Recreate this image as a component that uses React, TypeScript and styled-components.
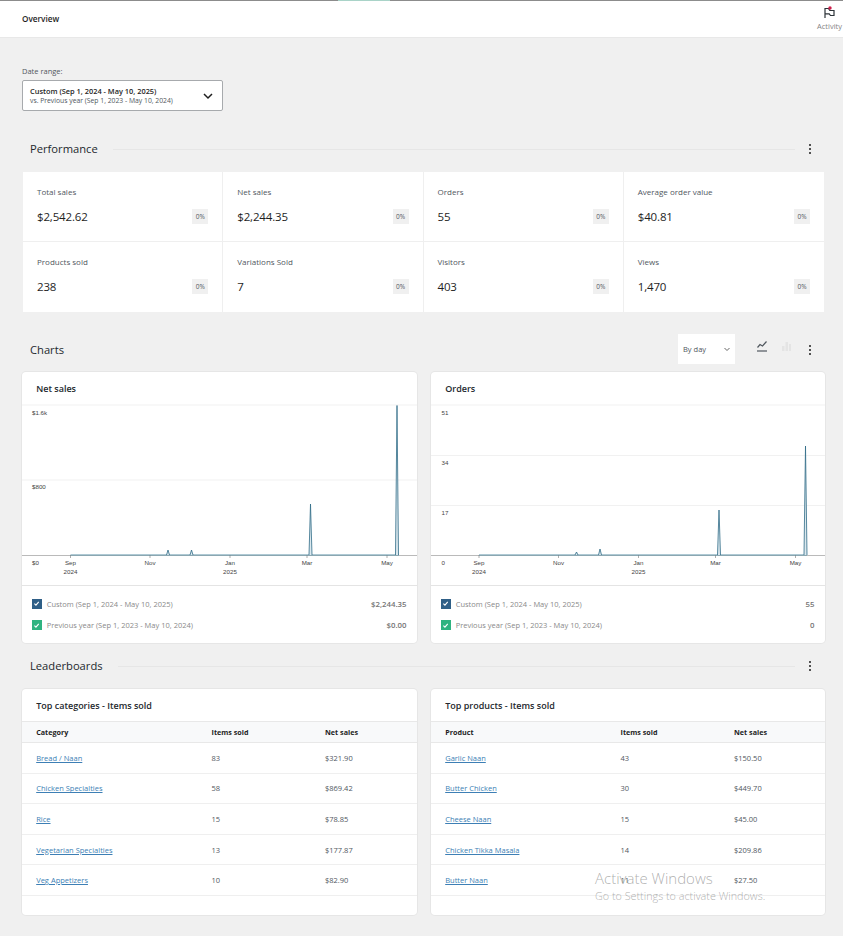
import styled, { createGlobalStyle } from 'styled-components';

const GlobalStyle = createGlobalStyle`
  html, body {
    margin: 0;
    padding: 0;
    background: #f0f0f0;
  }
  body {
    font-family: "Open Sans", "Noto Sans", sans-serif;
    color: #1e1e1e;
    -webkit-font-smoothing: antialiased;
  }
  * {
    box-sizing: border-box;
  }
`;

const stats = [
  { label: 'Total sales', value: '$2,542.62' },
  { label: 'Net sales', value: '$2,244.35' },
  { label: 'Orders', value: '55' },
  { label: 'Average order value', value: '$40.81' },
  { label: 'Products sold', value: '238' },
  { label: 'Variations Sold', value: '7' },
  { label: 'Visitors', value: '403' },
  { label: 'Views', value: '1,470' },
];

const netSalesChart = {
  gridLines: [1, 76],
  yLabels: [
    { text: '$1.6k', x: 10, y: 10.5 },
    { text: '$800', x: 10, y: 85 },
    { text: '$0', x: 10, y: 161 },
  ],
  xLabels: [
    { text: 'Sep', sub: '2024', x: 48.5 },
    { text: 'Nov', x: 128 },
    { text: 'Jan', sub: '2025', x: 208 },
    { text: 'Mar', x: 285 },
    { text: 'May', x: 365 },
  ],
  lineStart: 48.5,
  lineEnd: 377,
  spikes: [
    { x: 146, top: 146 },
    { x: 169.5, top: 146 },
    { x: 288.5, top: 100 },
    { x: 375, top: 1.5 },
  ],
};

const ordersChart = {
  gridLines: [1, 51.5, 101.5],
  yLabels: [
    { text: '51', x: 10.5, y: 10.5 },
    { text: '34', x: 10.5, y: 60.5 },
    { text: '17', x: 10.5, y: 111 },
    { text: '0', x: 10.5, y: 161 },
  ],
  xLabels: [
    { text: 'Sep', sub: '2024', x: 48 },
    { text: 'Nov', x: 127.5 },
    { text: 'Jan', sub: '2025', x: 207.5 },
    { text: 'Mar', x: 284.5 },
    { text: 'May', x: 364.5 },
  ],
  lineStart: 48,
  lineEnd: 376,
  spikes: [
    { x: 145.5, top: 148 },
    { x: 169, top: 145 },
    { x: 288, top: 106 },
    { x: 374.5, top: 42 },
  ],
};

const categories = [
  ['Bread / Naan', '83', '$321.90'],
  ['Chicken Specialties', '58', '$869.42'],
  ['Rice', '15', '$78.85'],
  ['Vegetarian Specialties', '13', '$177.87'],
  ['Veg Appetizers', '10', '$82.90'],
];

const products = [
  ['Garlic Naan', '43', '$150.50'],
  ['Butter Chicken', '30', '$449.70'],
  ['Cheese Naan', '15', '$45.00'],
  ['Chicken Tikka Masala', '14', '$209.86'],
  ['Butter Naan', '11', '$27.50'],
];

const AXIS_Y = 151;

const LineChart = ({ data }: { data: typeof netSalesChart }) => (
  <ChartSvg viewBox="0 0 395 181">
    {data.gridLines.map((y) => (
      <line key={y} x1="0" x2="395" y1={y} y2={y} stroke="#f1f1f1" strokeWidth="1" />
    ))}
    <line x1="0" x2="395" y1={AXIS_Y + 0.5} y2={AXIS_Y + 0.5} stroke="#a8a8a8" strokeWidth="0.8" />
    {data.yLabels.map((l) => (
      <AxisText key={l.text} x={l.x} y={l.y}>{l.text}</AxisText>
    ))}
    {data.xLabels.map((l) => (
      <g key={l.text}>
        <line x1={l.x} x2={l.x} y1={AXIS_Y} y2={AXIS_Y + 3} stroke="#777" strokeWidth="0.6" />
        <AxisText x={l.x} y={161} textAnchor="middle">{l.text}</AxisText>
        {l.sub && <AxisText x={l.x} y={169.5} textAnchor="middle">{l.sub}</AxisText>}
      </g>
    ))}
    <line x1={data.lineStart} x2={data.lineEnd} y1={AXIS_Y} y2={AXIS_Y} stroke="#5c93a8" strokeWidth="1" />
    {data.spikes.map((s) => (
      <polyline
        key={s.x}
        points={`${s.x - 1.5},${AXIS_Y} ${s.x},${s.top} ${s.x + 1.5},${AXIS_Y}`}
        fill="#dbe8ee"
        stroke="#2f6b86"
        strokeWidth="0.8"
      />
    ))}
  </ChartSvg>
);

const KebabMenu = () => (
  <Kebab>
    <span />
    <span />
    <span />
  </Kebab>
);

const LegendRow = ({ color, label, value }: { color: string; label: string; value: string }) => (
  <LegendLine>
    <LegendBox $color={color}>
      <svg width="7" height="7" viewBox="0 0 10 10">
        <path d="M2 5.2 L4.2 7.4 L8.2 2.8" fill="none" stroke="#fff" strokeWidth="1.6" />
      </svg>
    </LegendBox>
    <LegendLabel>{label}</LegendLabel>
    <LegendValue>{value}</LegendValue>
  </LegendLine>
);

const Leaderboard = ({ title, head, rows }: { title: string; head: string; rows: string[][] }) => (
  <Card>
    <CardTitle>{title}</CardTitle>
    <Table>
      <thead>
        <tr>
          <Th>{head}</Th>
          <Th>Items sold</Th>
          <Th>Net sales</Th>
        </tr>
      </thead>
      <tbody>
        {rows.map((row) => (
          <tr key={row[0]}>
            <Td><RowLink href="#">{row[0]}</RowLink></Td>
            <Td>{row[1]}</Td>
            <Td>{row[2]}</Td>
          </tr>
        ))}
      </tbody>
    </Table>
  </Card>
);

const App = () => (
  <Page>
    <GlobalStyle />
    <TopLine>
      <TopAccent />
    </TopLine>
    <Header>
      <HeaderTitle>Overview</HeaderTitle>
      <ActivityButton>
        <svg width="13" height="13" viewBox="0 0 13 13">
          <path d="M2 12 V2.5 H5.5 L6.8 4.5 H11 V9.5 H7.5 L6.2 7.8 H2" fill="none" stroke="#2c3338" strokeWidth="1.2" />
          <circle cx="7" cy="2" r="1.7" fill="#cc1e4a" />
        </svg>
        <span>Activity</span>
      </ActivityButton>
    </Header>

    <Content>
      <DateLabel>Date range:</DateLabel>
      <DateSelect>
        <div>
          <DateMain>Custom (Sep 1, 2024 - May 10, 2025)</DateMain>
          <DateSub>vs. Previous year (Sep 1, 2023 - May 10, 2024)</DateSub>
        </div>
        <svg width="12" height="12" viewBox="0 0 12 12">
          <path d="M2 4 L6 8 L10 4" fill="none" stroke="#1e1e1e" strokeWidth="1.5" />
        </svg>
      </DateSelect>

      <SectionHead $top={28} $bottom={13}>
        <SectionTitle>Performance</SectionTitle>
        <SectionRule />
        <KebabMenu />
      </SectionHead>

      <StatGrid>
        {stats.map((s) => (
          <StatCell key={s.label}>
            <StatLabel>{s.label}</StatLabel>
            <StatRow>
              <StatValue>{s.value}</StatValue>
              <StatBadge>0%</StatBadge>
            </StatRow>
          </StatCell>
        ))}
      </StatGrid>

      <SectionHead $top={28} $bottom={12}>
        <SectionTitle>Charts</SectionTitle>
        <ChartControls>
          <IntervalSelect>
            By day
            <svg width="8" height="8" viewBox="0 0 8 8">
              <path d="M1.5 3 L4 5.5 L6.5 3" fill="none" stroke="#555" strokeWidth="0.9" />
            </svg>
          </IntervalSelect>
          <ChartTypeIcon width="14" height="14" viewBox="0 0 14 14">
            <path d="M2.5 8.5 L5 5.5 L7.5 7 L11.5 2.5" fill="none" stroke="#50575e" strokeWidth="1.2" />
            <path d="M2 12 H12" stroke="#50575e" strokeWidth="1.2" />
          </ChartTypeIcon>
          <ChartTypeIcon width="14" height="14" viewBox="0 0 14 14">
            <path d="M3 12 V7 H5.5 V12 Z M6.5 12 V3 H9 V12 Z M10 12 V5 H12 V12 Z" fill="#e4e4e4" />
          </ChartTypeIcon>
        </ChartControls>
        <KebabMenu />
      </SectionHead>

      <TwoCols>
        <Card>
          <CardTitle>Net sales</CardTitle>
          <LineChart data={netSalesChart} />
          <Legend>
            <LegendRow color="#2f5f87" label="Custom (Sep 1, 2024 - May 10, 2025)" value="$2,244.35" />
            <LegendRow color="#2fb380" label="Previous year (Sep 1, 2023 - May 10, 2024)" value="$0.00" />
          </Legend>
        </Card>
        <Card>
          <CardTitle>Orders</CardTitle>
          <LineChart data={ordersChart} />
          <Legend>
            <LegendRow color="#2f5f87" label="Custom (Sep 1, 2024 - May 10, 2025)" value="55" />
            <LegendRow color="#2fb380" label="Previous year (Sep 1, 2023 - May 10, 2024)" value="0" />
          </Legend>
        </Card>
      </TwoCols>

      <SectionHead $top={13} $bottom={13}>
        <SectionTitle>Leaderboards</SectionTitle>
        <SectionRule />
        <KebabMenu />
      </SectionHead>

      <TwoCols>
        <Leaderboard title="Top categories - Items sold" head="Category" rows={categories} />
        <Leaderboard title="Top products - Items sold" head="Product" rows={products} />
      </TwoCols>
    </Content>

    <ActivationNotice>
      <ActivationTitle>Activate Windows</ActivationTitle>
      <ActivationText>Go to Settings to activate Windows.</ActivationText>
    </ActivationNotice>
  </Page>
);

export default App;

const Page = styled.div`
  position: relative;
  width: 843px;
  height: 936px;
  overflow: hidden;
  background: #f0f0f0;
`;

const TopLine = styled.div`
  height: 1px;
  background: #8c8c8c;
  padding-left: 338px;
`;

const TopAccent = styled.div`
  width: 52px;
  height: 1px;
  background: #a9d3c8;
`;

const Header = styled.header`
  height: 37px;
  background: #fff;
  display: flex;
  align-items: flex-start;
  justify-content: space-between;
  padding-left: 22px;
  border-bottom: 1px solid #e8e8e8;
`;

const HeaderTitle = styled.h1`
  margin: 12px 0 0;
  font-size: 8.2px;
  line-height: 12px;
  font-weight: 600;
`;

const ActivityButton = styled.div`
  width: 27px;
  display: flex;
  flex-direction: column;
  align-items: center;
  gap: 2px;
  padding-top: 5px;
  font-size: 7.5px;
  line-height: 10px;
  color: #858585;
  white-space: nowrap;
`;

const Content = styled.main`
  padding: 28px 18px 0 22px;
`;

const DateLabel = styled.div`
  font-size: 7.5px;
  line-height: 10px;
  color: #50575e;
  margin-bottom: 4px;
`;

const DateSelect = styled.div`
  width: 201px;
  height: 31px;
  background: #fff;
  border: 1px solid #a7aaad;
  border-radius: 2px;
  display: flex;
  align-items: center;
  justify-content: space-between;
  padding: 0 8px 0 7px;
`;

const DateMain = styled.div`
  font-size: 7.4px;
  line-height: 10px;
  font-weight: 600;
`;

const DateSub = styled.div`
  font-size: 6.8px;
  line-height: 10px;
  color: #50575e;
`;

const SectionHead = styled.div<{ $top: number; $bottom: number }>`
  height: 20px;
  margin: ${(p) => p.$top}px 0 ${(p) => p.$bottom}px;
  padding-left: 8px;
  display: flex;
  align-items: center;
  gap: 15px;
`;

const SectionTitle = styled.h2`
  margin: 0 0 2px;
  font-size: 11.2px;
  font-weight: 400;
  color: #23282d;
  white-space: nowrap;
`;

const SectionRule = styled.div`
  flex: 1;
  height: 1px;
  background: #e6e6e6;
`;

const Kebab = styled.div`
  width: 10px;
  margin: 0 10px 0 -5px;
  display: flex;
  flex-direction: column;
  align-items: center;
  gap: 1.5px;
  span {
    width: 2.5px;
    height: 2.5px;
    border-radius: 50%;
    background: #1e1e1e;
  }
`;

const StatGrid = styled.section`
  margin-left: 1px;
  width: 801px;
  display: grid;
  grid-template-columns: repeat(4, 1fr);
  background: #fff;
`;

const StatCell = styled.div`
  height: 70px;
  padding: 14px 14px 0;
  border-right: 1px solid #efefef;
  border-bottom: 1px solid #efefef;
  &:nth-child(4n) {
    border-right: none;
  }
  &:nth-child(n + 5) {
    border-bottom: none;
  }
`;

const StatLabel = styled.div`
  font-size: 8px;
  line-height: 12px;
  color: #50575e;
`;

const StatRow = styled.div`
  margin-top: 8px;
  display: flex;
  align-items: center;
  justify-content: space-between;
`;

const StatValue = styled.div`
  margin-top: 2px;
  font-size: 11.5px;
  letter-spacing: -0.15px;
  line-height: 18px;
  color: #1e1e1e;
`;

const StatBadge = styled.div`
  width: 16px;
  height: 15px;
  background: #f0f0f0;
  font-size: 6.5px;
  line-height: 15px;
  text-align: center;
  color: #50575e;
`;

const ChartControls = styled.div`
  margin-left: auto;
  margin-right: 2px;
  display: flex;
  align-items: center;
  gap: 10px;
`;

const ChartTypeIcon = styled.svg`
  margin-bottom: 9px;
`;

const IntervalSelect = styled.div`
  width: 57px;
  height: 30px;
  background: #fff;
  margin: 0 10px 2px 0;
  padding: 0 4px 0 5px;
  display: flex;
  align-items: center;
  justify-content: space-between;
  font-size: 7.5px;
  color: #50575e;
`;

const TwoCols = styled.div`
  display: grid;
  grid-template-columns: 395px 394px;
  gap: 14px;
`;

const Card = styled.div`
  background: #fff;
  border-radius: 4px;
  box-shadow: 0 0 0 1px #e6e6e6;
  overflow: hidden;
`;

const CardTitle = styled.h3`
  margin: 0;
  height: 32px;
  padding-left: 14.2px;
  font-size: 9px;
  line-height: 33px;
  font-weight: 600;
  color: #23282d;
`;

const ChartSvg = styled.svg`
  display: block;
  width: 395px;
  height: 181px;
`;

const AxisText = styled.text`
  font-family: "Liberation Sans", Arial, sans-serif;
  font-size: 6.2px;
  fill: #444;
`;

const Legend = styled.div`
  height: 58px;
  border-top: 1px solid #e4e4e4;
  padding: 7px 10.5px 0 9.7px;
`;

const LegendLine = styled.div`
  height: 21.5px;
  display: flex;
  align-items: center;
  font-size: 7.8px;
`;

const LegendBox = styled.div<{ $color: string }>`
  width: 10px;
  height: 10px;
  background: ${(p) => p.$color};
  display: flex;
  align-items: center;
  justify-content: center;
  margin-right: 5px;
`;

const LegendLabel = styled.span`
  font-size: 7.5px;
  color: #8a8a8a;
`;

const LegendValue = styled.span`
  margin-left: auto;
  font-weight: 600;
  color: #757575;
`;

const Table = styled.table`
  width: 100%;
  height: 174px;
  margin-bottom: 19px;
  border-collapse: collapse;
  table-layout: fixed;
  tbody tr {
    height: 30.6px;
    border-bottom: 1px solid #efefef;
  }
`;

const Th = styled.th`
  height: 21px;
  background: #f8f9fa;
  border-top: 1px solid #e8e8e8;
  border-bottom: 1px solid #e8e8e8;
  padding: 0 0 0 14.2px;
  font-size: 7.2px;
  font-weight: 700;
  text-align: left;
  color: #1e1e1e;
  &:first-child {
    width: 189.5px;
  }
  &:nth-child(2) {
    width: 113.5px;
    padding-left: 0;
  }
  &:last-child {
    padding-left: 0;
  }
`;

const Td = styled.td`
  padding: 0;
  font-size: 7.5px;
  color: #50575e;
  &:first-child {
    padding-left: 14.2px;
  }
`;

const RowLink = styled.a`
  color: #3d7fb5;
  text-decoration: underline;
`;

const ActivationNotice = styled.div`
  position: absolute;
  left: 595px;
  top: 868px;
  pointer-events: none;
  color: rgba(120, 120, 120, 0.6);
  white-space: nowrap;
`;

const ActivationTitle = styled.div`
  font-size: 15px;
  line-height: 20px;
  font-weight: 300;
`;

const ActivationText = styled.div`
  font-size: 10.8px;
  line-height: 15px;
  font-weight: 300;
`;
